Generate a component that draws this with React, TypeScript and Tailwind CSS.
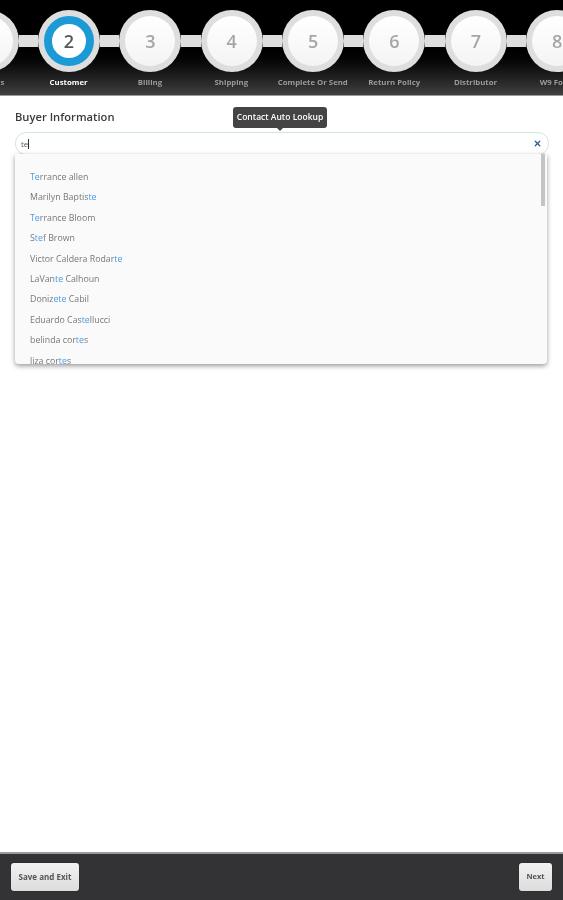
import { X } from 'lucide-react';

const steps = [
  { n: 1, label: 'Contacts' },
  { n: 2, label: 'Customer' },
  { n: 3, label: 'Billing' },
  { n: 4, label: 'Shipping' },
  { n: 5, label: 'Complete Or Send' },
  { n: 6, label: 'Return Policy' },
  { n: 7, label: 'Distributor' },
  { n: 8, label: 'W9 Form' },
];

// each name is split into [plain, match, plain] for the blue highlight
const contacts = [
  ['', 'Te', 'rrance allen'],
  ['Marilyn Baptis', 'te', ''],
  ['', 'Te', 'rrance Bloom'],
  ['S', 'te', 'f Brown'],
  ['Victor Caldera Rodar', 'te', ''],
  ['LaVan', 'te', ' Calhoun'],
  ['Doniz', 'ete', ' Cabil'],
  ['Eduardo Cas', 'te', 'llucci'],
  ['belinda cor', 'te', 's'],
  ['liza cor', 'te', 's'],
];

const Stepper = () => {
  return (
    <div className="h-[96px] shrink-0 overflow-hidden bg-gradient-to-b from-black from-45% to-[#404040] border-b border-[#9a9a9a]">
      <div className="w-[700px] -ml-[43.5px] pt-[10px] flex items-center">
        {steps.map((s) => (
          <div key={s.n} className="flex items-center shrink-0">
            <div className="w-[62px] h-[62px] rounded-full bg-[#dedede] flex items-center justify-center">
              {s.n === 2 ? (
                <div className="w-[50px] h-[50px] rounded-full bg-white border-[8px] border-[#1b9ad6] flex items-center justify-center text-[18px] font-semibold text-[#55585c]">
                  2
                </div>
              ) : (
                <div className="w-[50px] h-[50px] rounded-full bg-gradient-to-b from-white to-[#f4f4f4] flex items-center justify-center text-[18px] font-semibold text-[#a4a7aa]">
                  {s.n}
                </div>
              )}
            </div>
            <div className="w-[19.4px] h-[12px] bg-[#dedede]" />
          </div>
        ))}
      </div>
      <div className="w-[700px] -ml-[53.5px] flex mt-[4px]">
        {steps.map((s) => (
          <div
            key={s.n}
            className={`w-[81.4px] shrink-0 text-center text-[7.8px] font-bold leading-[12px] whitespace-nowrap ${
              s.n === 2 ? 'text-white' : 'text-[#9a9a9a]'
            }`}
          >
            {s.label}
          </div>
        ))}
      </div>
    </div>
  );
};

const App = () => {
  return (
    <div className="w-[563px] h-[900px] flex flex-col bg-white overflow-hidden font-['Open_Sans',sans-serif] blur-[0.5px]">
      <Stepper />
      <div className="flex-1 pt-[13px] px-[15px]">
        <p className="text-[11.2px] font-semibold leading-[16px] text-[#3a3a3a]">Buyer Information</p>
        <div className="relative mt-[7px] mr-[-1px]">
          <div className="absolute left-[218px] -top-[25px] w-[94px] h-[21px] rounded-[3px] bg-[#444] flex items-center justify-center text-[8.5px] font-semibold text-white whitespace-nowrap">
            Contact Auto Lookup
            <span className="absolute left-[44px] -bottom-[3px] w-0 h-0 border-x-[3px] border-x-transparent border-t-[3px] border-t-[#444]" />
          </div>
          <div className="h-[23px] rounded-[11px] border border-[#cfe6dc] bg-white flex items-center justify-between pl-[5px] pr-[6px]">
            <span className="flex items-center text-[8px] text-[#555] leading-none">
              te<span className="w-px h-[10px] bg-[#333]" />
            </span>
            <X size={9} strokeWidth={3.5} className="text-[#2c5a96]" />
          </div>
          <div className="absolute left-0 top-[22px] w-[532px] h-[210px] overflow-hidden rounded-b-[4px] bg-[#fafafa] shadow-[0_2px_5px_rgba(0,0,0,0.4)] pt-[13px] pl-[15px]">
            <div className="absolute right-[2px] top-0 w-[4px] h-[52px] bg-[#c4c4c4]" />
            {contacts.map((c, i) => (
              <p key={i} className="h-[20.4px] text-[8.8px] leading-[20px] text-[#777] whitespace-nowrap">
                {c[0]}
                <span className="text-[#4a9be8]">{c[1]}</span>
                {c[2]}
              </p>
            ))}
          </div>
        </div>
      </div>
      <div className="h-[48px] shrink-0 bg-[#333336] border-t-2 border-[#9a9a9a] flex items-center justify-between px-[11px]">
        <button className="w-[68px] h-[28px] rounded-[3px] bg-gradient-to-b from-[#f2f2f2] to-[#dcdcdc] text-[8px] font-bold text-[#555] shadow-[0_0_1px_#111]">
          Save and Exit
        </button>
        <button className="w-[33px] h-[28px] rounded-[3px] bg-gradient-to-b from-[#f2f2f2] to-[#dcdcdc] text-[7.5px] font-bold text-[#555] shadow-[0_0_1px_#111]">
          Next
        </button>
      </div>
    </div>
  );
};

export default App;
